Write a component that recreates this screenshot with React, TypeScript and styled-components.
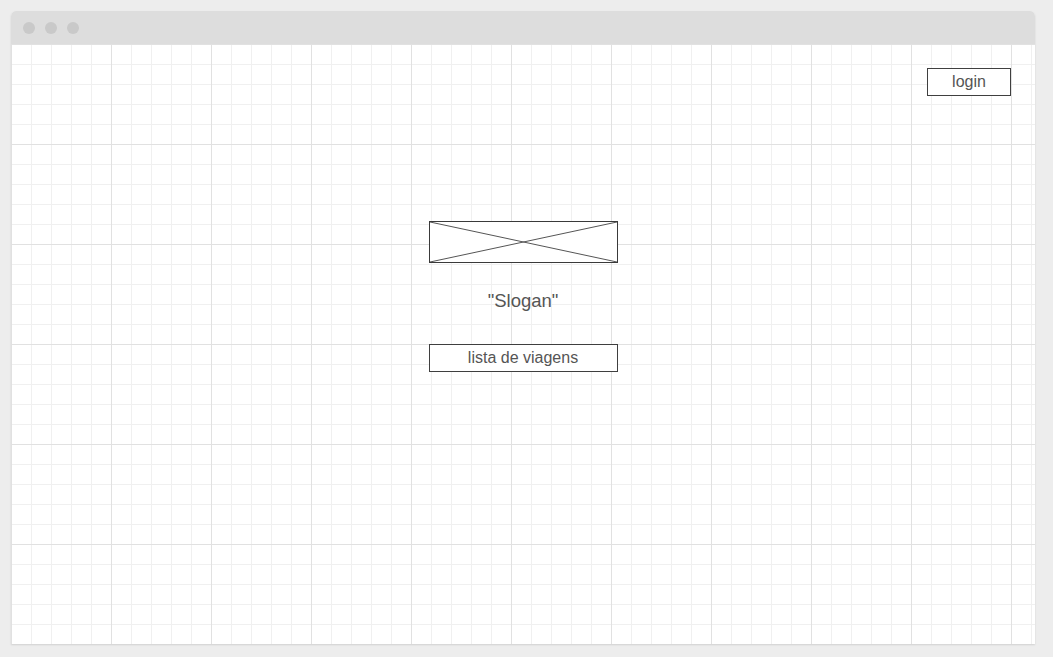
import styled, { createGlobalStyle } from 'styled-components'

const GlobalStyle = createGlobalStyle`
  html, body {
    margin: 0;
    padding: 0;
    background: #ededed;
    font-family: 'Liberation Sans', Arial, sans-serif;
  }
`

const Page = styled.div`
  padding: 11px 18px 13px 11px;
`

const Window = styled.div`
  width: 1024px;
  height: 633px;
  display: flex;
  flex-direction: column;
  background: #fff;
  border-radius: 5px 5px 0 0;
  box-shadow: 0 1px 2px rgba(0, 0, 0, 0.12);
  overflow: hidden;
`

const TitleBar = styled.div`
  height: 33px;
  flex: none;
  display: flex;
  align-items: center;
  gap: 10px;
  padding-left: 12px;
  background: #dddddd;
`

const Dot = styled.span`
  width: 12px;
  height: 12px;
  border-radius: 50%;
  background: #c9c9c9;
`

const Canvas = styled.div`
  flex: 1;
  display: flex;
  flex-direction: column;
  padding: 24px 24px 0;
  background-color: #fff;
  background-image:
    linear-gradient(to right, #e1e1e1 1px, transparent 1px),
    linear-gradient(to bottom, #e1e1e1 1px, transparent 1px),
    linear-gradient(to right, #f0f0f0 1px, transparent 1px),
    linear-gradient(to bottom, #f0f0f0 1px, transparent 1px);
  background-size: 100px 100px, 100px 100px, 20px 20px, 20px 20px;
`

const Header = styled.div`
  display: flex;
  justify-content: flex-end;
`

const Box = styled.div<{ $width: number }>`
  box-sizing: border-box;
  width: ${({ $width }) => $width}px;
  height: 28px;
  display: flex;
  align-items: center;
  justify-content: center;
  border: 1px solid #3f3f3f;
  background: #fff;
  color: #555;
  font-size: 16px;
`

const Main = styled.div`
  display: flex;
  flex-direction: column;
  align-items: center;
  margin-top: 125px;
`

const ImagePlaceholder = styled.div`
  box-sizing: border-box;
  width: 189px;
  height: 42px;
  border: 1px solid #3a3a3a;
  background: #fff;

  svg {
    display: block;
    width: 100%;
    height: 100%;
  }
`

const Slogan = styled.div`
  margin-top: 27px;
  font-size: 18.5px;
  line-height: 22px;
  color: #555;
`

const Action = styled(Box)`
  margin-top: 32px;
`

export default function App() {
  return (
    <>
      <GlobalStyle />
      <Page>
        <Window>
          <TitleBar>
            <Dot />
            <Dot />
            <Dot />
          </TitleBar>
          <Canvas>
            <Header>
              <Box $width={84}>login</Box>
            </Header>
            <Main>
              <ImagePlaceholder>
                <svg viewBox="0 0 100 100" preserveAspectRatio="none">
                  <line x1="0" y1="0" x2="100" y2="100" stroke="#555" strokeWidth="1" vectorEffect="non-scaling-stroke" />
                  <line x1="100" y1="0" x2="0" y2="100" stroke="#555" strokeWidth="1" vectorEffect="non-scaling-stroke" />
                </svg>
              </ImagePlaceholder>
              <Slogan>"Slogan"</Slogan>
              <Action $width={189}>lista de viagens</Action>
            </Main>
          </Canvas>
        </Window>
      </Page>
    </>
  )
}
